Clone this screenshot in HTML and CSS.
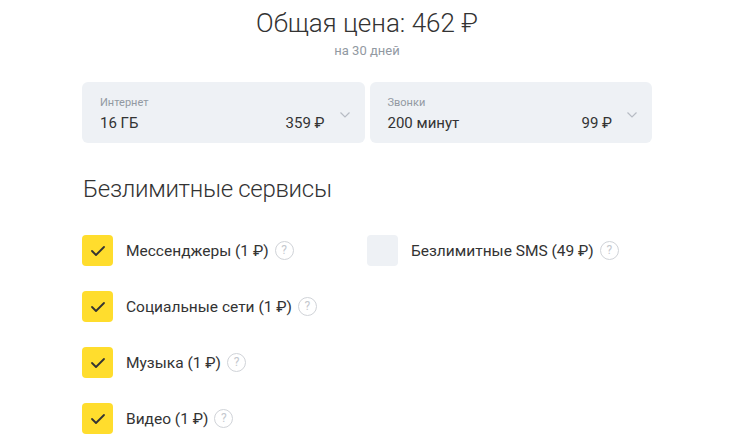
FILE: index.html
```html
<!DOCTYPE html>
<html lang="ru">
<head>
<meta charset="utf-8">
<link rel="stylesheet" href="styles.css">
</head>
<body>
<div class="page">
  <div class="total">
    <div class="total-title">Общая цена: 462 ₽</div>
    <div class="total-sub">на 30 дней</div>
  </div>
  <div class="selects">
    <div class="select">
      <div class="select-body">
        <div class="select-label">Интернет</div>
        <div class="select-row"><span>16 ГБ</span><span>359 ₽</span></div>
      </div>
      <svg class="chev" width="12" height="8" viewBox="0 0 12 8"><path d="M1.5 1.5l4.5 4.5 4.5-4.5" fill="none" stroke="#b7bcc4" stroke-width="1.2"/></svg>
    </div>
    <div class="select">
      <div class="select-body">
        <div class="select-label">Звонки</div>
        <div class="select-row"><span>200 минут</span><span>99 ₽</span></div>
      </div>
      <svg class="chev" width="12" height="8" viewBox="0 0 12 8"><path d="M1.5 1.5l4.5 4.5 4.5-4.5" fill="none" stroke="#b7bcc4" stroke-width="1.2"/></svg>
    </div>
  </div>
  <h2 class="heading">Безлимитные сервисы</h2>
  <div class="services">
    <div class="col">
      <div class="item"><span class="box on"><svg width="16" height="12" viewBox="0 0 16 12"><path d="M2 6l4 4 8-8" fill="none" stroke="#333" stroke-width="1.8" stroke-linecap="round" stroke-linejoin="round"/></svg></span><span class="label">Мессенджеры (1 ₽)</span><span class="help">?</span></div>
      <div class="item"><span class="box on"><svg width="16" height="12" viewBox="0 0 16 12"><path d="M2 6l4 4 8-8" fill="none" stroke="#333" stroke-width="1.8" stroke-linecap="round" stroke-linejoin="round"/></svg></span><span class="label">Социальные сети (1 ₽)</span><span class="help">?</span></div>
      <div class="item"><span class="box on"><svg width="16" height="12" viewBox="0 0 16 12"><path d="M2 6l4 4 8-8" fill="none" stroke="#333" stroke-width="1.8" stroke-linecap="round" stroke-linejoin="round"/></svg></span><span class="label">Музыка (1 ₽)</span><span class="help">?</span></div>
      <div class="item"><span class="box on"><svg width="16" height="12" viewBox="0 0 16 12"><path d="M2 6l4 4 8-8" fill="none" stroke="#333" stroke-width="1.8" stroke-linecap="round" stroke-linejoin="round"/></svg></span><span class="label">Видео (1 ₽)</span><span class="help">?</span></div>
    </div>
    <div class="col">
      <div class="item"><span class="box"></span><span class="label">Безлимитные SMS (49 ₽)</span><span class="help">?</span></div>
    </div>
  </div>
</div>
</body>
</html>
```
FILE: styles.css
```css
* { box-sizing: border-box; }
body {
  margin: 0;
  background: #fff;
  font-family: Roboto, "Liberation Sans", sans-serif;
  color: #333;
}
.page {
  width: 570px;
  margin-left: 82px;
}
.total {
  text-align: center;
  padding-top: 6px;
}
.total-title {
  font-size: 26px;
  line-height: 34px;
  font-weight: 300;
  color: #333;
}
.total-sub {
  font-size: 13px;
  line-height: 16px;
  color: #9299a2;
  margin-top: 3px;
}
.selects {
  display: flex;
  gap: 5px;
  margin-top: 23px;
}
.select {
  flex: 1;
  height: 61px;
  background: #eef1f5;
  border-radius: 6px;
  display: flex;
  align-items: flex-start;
  padding: 14px 14px 0 18px;
}
.select-body { flex: 1; }
.select-label {
  font-size: 11px;
  line-height: 14px;
  color: #9299a2;
}
.select-row {
  display: flex;
  justify-content: space-between;
  font-size: 15px;
  line-height: 20px;
  margin-top: 3px;
  color: #333;
}
.chev {
  margin-left: 14px;
  margin-top: 15px;
}
.heading {
  margin: 30px 0 0 1px;
  font-size: 24px;
  line-height: 32px;
  font-weight: 300;
  letter-spacing: -0.3px;
  color: #333;
}
.services {
  display: flex;
  margin-top: 30px;
}
.col {
  width: 290px;
  display: flex;
  flex-direction: column;
  gap: 25px;
}
.item {
  display: flex;
  align-items: center;
  height: 31px;
}
.box {
  width: 31px;
  height: 31px;
  border-radius: 4px;
  background: #eef1f5;
  display: flex;
  align-items: center;
  justify-content: center;
  margin-right: 13px;
}
.box.on { background: #ffdd2d; }
.label {
  font-size: 15.5px;
  color: #333;
}
.help {
  width: 19px;
  height: 19px;
  border: 1px solid #d0d3d8;
  border-radius: 50%;
  margin-left: 6px;
  font-size: 12px;
  line-height: 17px;
  text-align: center;
  color: #c4c8ce;
}
```
